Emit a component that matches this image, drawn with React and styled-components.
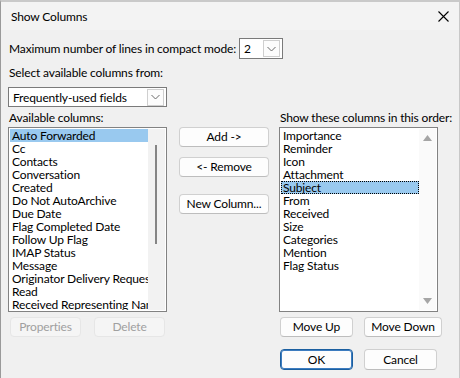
import React from "react";
import styled, { createGlobalStyle, css } from "styled-components";

const Global = createGlobalStyle`
  html, body { margin: 0; padding: 0; background: #f0f0f0; }
  body { font-family: Lato, "Noto Sans", sans-serif; font-size: 12px; letter-spacing: -0.15px; color: #000; }
  * { box-sizing: border-box; }
`;

const Window = styled.div`
  width: 460px;
  height: 378px;
  background: #f0f0f0;
  border-left: 1px solid #9a9a9a;
  border-right: 1px solid #c8c8c8;
  border-top: 2px solid #c9c9c9;
  display: flex;
  flex-direction: column;
  overflow: hidden;
`;

const TitleBar = styled.div`
  height: 28px;
  display: flex;
  align-items: center;
  justify-content: space-between;
  padding: 0 10px 0 10px;
  background: #f3f3f3;
`;

const Title = styled.span`
  font-size: 12px;
  padding-top: 1px;
`;

const Body = styled.div`
  flex: 1;
  padding: 0 0 0 7px;
  display: flex;
  flex-direction: column;
`;

const CompactRow = styled.div`
  display: flex;
  align-items: center;
  gap: 3px;
  margin-top: 8px;
  padding-left: 1px;
  height: 21px;
`;

const Label = styled.div`
  height: 15px;
  line-height: 15px;
  padding-left: ${(p) => p.$indent || 1}px;
  margin-top: ${(p) => p.$mt || 0}px;
  white-space: nowrap;
`;

const Combo = styled.div`
  width: ${(p) => p.$w}px;
  height: ${(p) => p.$h}px;
  background: #fff;
  border: 1px solid #7a7a7a;
  display: flex;
  align-items: center;
  justify-content: space-between;
  padding: 0 2px 0 4px;
  margin-top: ${(p) => p.$mt || 0}px;
`;

const DropBtn = styled.span`
  width: 17px;
  height: 17px;
  border: 1px solid #cfcfcf;
  background: #fcfcfc;
  display: flex;
  align-items: center;
  justify-content: center;
`;

const Columns = styled.div`
  display: grid;
  grid-template-columns: 159px 90px 164px;
  column-gap: 11px;
  margin-top: 3px;
`;

const Col = styled.div`
  display: flex;
  flex-direction: column;
`;

const MidCol = styled.div`
  display: flex;
  flex-direction: column;
  padding-top: 17px;
  padding-left: 1px;
`;

const ListBox = styled.div`
  margin-top: 2px;
  width: 159px;
  height: 185px;
  background: #fff;
  border: 1px solid #828282;
  padding: 1px;
  display: flex;
  overflow: hidden;
`;

const Items = styled.div`
  width: 138px;
  display: flex;
  flex-direction: column;
  overflow: hidden;
`;

const Item = styled.div`
  height: 13px;
  line-height: 13px;
  padding-left: 2px;
  white-space: nowrap;
  ${(p) =>
    p.$selected &&
    css`
      background: #99c9ef;
    `}
  ${(p) =>
    p.$focus &&
    css`
      outline: 1px dotted #000;
      outline-offset: -1px;
    `}
`;

const ScrollTrack = styled.div`
  width: 17px;
  position: relative;
  background: ${(p) => p.$bg};
  display: flex;
  flex-direction: column;
  align-items: center;
  justify-content: space-between;
  padding: 6px 0 6px;
`;

const Thumb = styled.div`
  position: absolute;
  left: 7px;
  top: ${(p) => p.$top}px;
  width: 2px;
  height: ${(p) => p.$h}px;
  background: #858585;
`;

const BtnRow = styled.div`
  display: flex;
  gap: ${(p) => p.$gap}px;
  padding-left: ${(p) => p.$pl || 0}px;
  margin-top: ${(p) => p.$mt}px;
`;

const Button = styled.button`
  font-family: inherit;
  font-size: 12px;
  letter-spacing: -0.15px;
  color: ${(p) => (p.disabled ? "#a0a0a0" : "#000")};
  width: ${(p) => p.$w}px;
  height: ${(p) => p.$h || 20}px;
  margin-top: ${(p) => p.$mt || 0}px;
  background: ${(p) => (p.disabled ? "#f5f5f5" : "#fdfdfd")};
  border: 1px solid ${(p) => (p.disabled ? "#e6e6e6" : "#d0d0d0")};
  border-bottom-color: ${(p) => (p.disabled ? "#e6e6e6" : "#bdbdbd")};
  border-radius: 4px;
  padding: 0;
  line-height: 16px;
  ${(p) =>
    p.$default &&
    css`
      border: 1px solid #1b5fa0;
      box-shadow: inset 0 0 0 1px #3d7cbf;
    `}
`;

const Chevron = () => (
  <svg width="9" height="6" viewBox="0 0 9 6">
    <path d="M0.5 1 L4.5 5 L8.5 1" fill="none" stroke="#6a6a6a" strokeWidth="1" />
  </svg>
);

const CloseIcon = () => (
  <svg width="11" height="11" viewBox="0 0 11 11">
    <path d="M0.5 0.5 L10.5 10.5 M10.5 0.5 L0.5 10.5" stroke="#000" strokeWidth="1.1" />
  </svg>
);

const Arrow = ({ up }) => (
  <svg width="9" height="6" viewBox="0 0 9 6">
    <path d={up ? "M0 6 L4.5 0 L9 6 Z" : "M0 0 L9 0 L4.5 6 Z"} fill="#a5a5a5" />
  </svg>
);

const available = [
  "Auto Forwarded",
  "Cc",
  "Contacts",
  "Conversation",
  "Created",
  "Do Not AutoArchive",
  "Due Date",
  "Flag Completed Date",
  "Follow Up Flag",
  "IMAP Status",
  "Message",
  "Originator Delivery Requested",
  "Read",
  "Received Representing Name",
];

const shown = [
  "Importance",
  "Reminder",
  "Icon",
  "Attachment",
  "Subject",
  "From",
  "Received",
  "Size",
  "Categories",
  "Mention",
  "Flag Status",
];

export default function App() {
  return (
    <>
      <Global />
      <Window>
        <TitleBar>
          <Title>Show Columns</Title>
          <CloseIcon />
        </TitleBar>
        <Body>
          <CompactRow>
            <span>Maximum number of lines in compact mode:</span>
            <Combo $w={44} $h={21}>
              <span>2</span>
              <DropBtn>
                <Chevron />
              </DropBtn>
            </Combo>
          </CompactRow>
          <Label $mt={6}>Select available columns from:</Label>
          <Combo $w={159} $h={20} $mt={7}>
            <span>Frequently-used fields</span>
            <DropBtn>
              <Chevron />
            </DropBtn>
          </Combo>
          <Columns>
            <Col>
              <Label>Available columns:</Label>
              <ListBox>
                <Items>
                  {available.map((t, i) => (
                    <Item key={t} $selected={i === 0}>
                      {t}
                    </Item>
                  ))}
                </Items>
                <ScrollTrack $bg="#f2f2f2">
                  <Thumb $top={16} $h={99} />
                </ScrollTrack>
              </ListBox>
              <BtnRow $gap={13} $pl={2} $mt={5}>
                <Button disabled $w={71}>Properties</Button>
                <Button disabled $w={71}>Delete</Button>
              </BtnRow>
            </Col>
            <MidCol>
              <Button $w={90}>Add -&gt;</Button>
              <Button $w={90} $mt={10}>&lt;- Remove</Button>
              <Button $w={90} $mt={17}>New Column...</Button>
            </MidCol>
            <Col>
              <Label $indent={1}>Show these columns in this order:</Label>
              <ListBox>
                <Items>
                  {shown.map((t, i) => (
                    <Item key={t} $selected={i === 4} $focus={i === 4}>
                      {t}
                    </Item>
                  ))}
                </Items>
                <ScrollTrack $bg="#fafafa">
                  <Arrow up />
                  <Arrow />
                </ScrollTrack>
              </ListBox>
              <BtnRow $gap={11} $pl={1} $mt={5}>
                <Button $w={73}>Move Up</Button>
                <Button $w={78}>Move Down</Button>
              </BtnRow>
              <BtnRow $gap={11} $pl={1} $mt={12}>
                <Button $default $w={73} $h={21}>OK</Button>
                <Button $w={73} $h={21}>Cancel</Button>
              </BtnRow>
            </Col>
          </Columns>
        </Body>
      </Window>
    </>
  );
}
